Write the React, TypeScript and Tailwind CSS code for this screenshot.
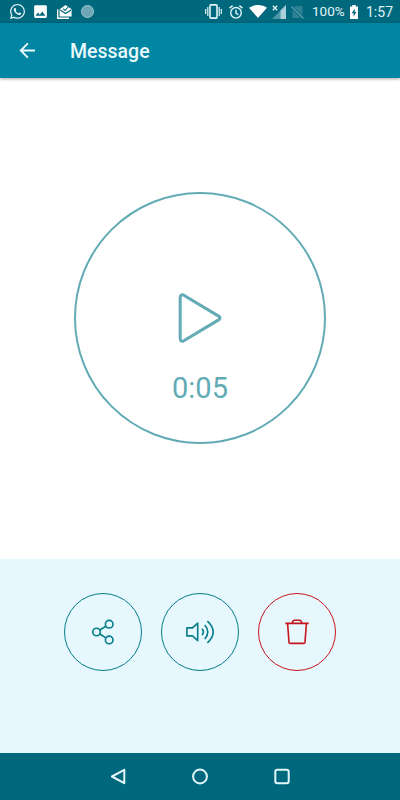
import React from 'react';
import { FaWhatsapp } from 'react-icons/fa';
import { MdImage } from 'react-icons/md';

function StatusBar() {
  return (
    <div className="h-[23px] shrink-0 bg-[#00687d] text-[#e2f4f8] flex items-center pl-[9px] pr-2">
      <FaWhatsapp className="w-[17px] h-[17px]" />
      <MdImage className="w-[17px] h-[17px] ml-[6px] text-white" />
      <svg className="w-[15px] h-[14px] ml-[8px]" viewBox="0 0 15 14">
        <path d="M0 4.5h1.4v8.1H12V14H0z" fill="#fff" />
        <path d="M2.6 4.3 8.6 0l6 4.3v7.2h-12z" fill="#fff" />
        <path d="m3.2 4.9 5.3 3.7L14 4.9" fill="none" stroke="#00687d" strokeWidth="1.2" />
        <path d="m6.2 3.6 1.9 1.8 3.5-3.9" fill="none" stroke="#00687d" strokeWidth="1.1" />
      </svg>
      <div className="w-[13px] h-[13px] ml-[9px] rounded-full bg-[#6ea6b5] border border-[#9cc8d2]" />

      <div className="ml-auto flex items-center">
        <svg className="w-[17px] h-[15px]" viewBox="0 0 17 15" fill="none" stroke="currentColor" strokeWidth="1.6">
          <rect x="5" y="0.9" width="7" height="13.2" rx="0.8" />
          <path d="M2.8 3v9M.7 5v5M14.2 3v9M16.3 5v5" strokeWidth="1.2" />
        </svg>
        <svg className="w-[14px] h-[14px] ml-[7px]" viewBox="0 0 14 14" fill="none" stroke="currentColor" strokeWidth="1.4">
          <circle cx="7" cy="7.8" r="5.3" />
          <path d="M7 4.8v3.4l2.3 1.4M.5 3.1 3.6.6M13.5 3.1 10.4.6" />
        </svg>
        <svg className="w-[18px] h-[13px] ml-[6px]" viewBox="0 0 18 13">
          <path d="M0 2.8C5-.9 13-.9 18 2.8L9 13z" fill="#fff" />
        </svg>
        <svg className="w-[14px] h-[14px] ml-[5px]" viewBox="0 0 14 14">
          <path d="M14 0v14H0z" fill="#4c98a8" />
          <path d="M14 0v14H8.6V5.4z" fill="#a9d0d8" />
          <path d="m.8.8 4.4 4.4M5.2.8.8 5.2" stroke="#e2f4f8" strokeWidth="1.3" />
        </svg>
        <svg className="w-[13px] h-[14px] ml-[5px]" viewBox="0 0 13 14">
          <path d="M4 1h7.5v12H1.5V4z" fill="#2d8191" />
          <path d="m.5 1.5 12 12" stroke="#00687d" strokeWidth="3" />
          <path d="m.5 1.5 12 12" stroke="#5b9fae" strokeWidth="1.2" />
        </svg>
        <span className="ml-[8px] w-[34px] text-[13.5px] leading-none whitespace-nowrap">100%</span>
        <svg className="w-[8px] h-[14px] ml-[4px]" viewBox="0 0 8 14">
          <path d="M2.3 0h3.4v1.4H8V14H0V1.4h2.3z" fill="#fff" />
          <path d="M4.8 3.4 1.7 8.3h1.9v3.5l2.8-5H4.6z" fill="#00687d" />
        </svg>
        <span className="ml-[8px] w-[26px] text-[14px] leading-none whitespace-nowrap">1:57</span>
      </div>
    </div>
  );
}

function ShareIcon() {
  return (
    <svg className="w-6 h-[26px]" viewBox="0 0 24 26" fill="none" stroke="currentColor" strokeWidth="1.6">
      <circle cx="5.5" cy="13" r="3.8" />
      <circle cx="18.2" cy="5.2" r="3.8" />
      <circle cx="18.2" cy="20.9" r="3.8" />
      <path d="m8.8 11 6.1-3.8M8.8 15l6.1 3.9" />
    </svg>
  );
}

function SpeakerIcon() {
  return (
    <svg className="w-[30px] h-[26px]" viewBox="0 0 30 26" fill="none" stroke="currentColor" strokeWidth="1.6">
      <path d="M1.9 8.9h5.6l5.2-4.7v17.4l-5.2-4.7H1.9z" strokeLinejoin="round" />
      <path d="M17 9.9q2.8 3.1 0 6.2M19.8 6q6 7 0 14M22.4 2.2q11.6 10.8 0 21.6" />
    </svg>
  );
}

function TrashIcon() {
  return (
    <svg className="w-[26px] h-[28px]" viewBox="0 0 26 28" fill="none" stroke="currentColor" strokeWidth="1.6">
      <path d="M1.3 5.4h23.4M8.2 5.2q.4-2.9 2.2-2.9h5.2q1.8 0 2.2 2.9" />
      <path d="M3.6 5.4 5 24.4q.1 1 1.1 1h13.8q1 0 1.1-1l1.4-19" />
    </svg>
  );
}

export default function App() {
  const actions = [
    { label: 'Share', icon: <ShareIcon />, color: 'text-[#067c88]' },
    { label: 'Speaker', icon: <SpeakerIcon />, color: 'text-[#067c88]' },
    { label: 'Delete', icon: <TrashIcon />, color: 'text-[#c4161c]' },
  ];

  return (
    <div className="w-full h-screen flex flex-col bg-white overflow-hidden font-['Roboto',sans-serif]">
      <StatusBar />

      <header className="h-[55px] shrink-0 bg-[#0086a2] text-[#e8f8fc] flex items-center pl-[19px] shadow-[0_1px_3px_rgba(0,0,0,0.35)]">
        <button aria-label="Back">
          <svg className="w-[17px] h-[17px]" viewBox="0 0 17 17" fill="none" stroke="currentColor" strokeWidth="1.9">
            <path d="M16 8.5H2M8.9 1.4 1.8 8.5l7.1 7.1" />
          </svg>
        </button>
        <h1 className="ml-[34px] pt-[2px] text-[19.5px] leading-6 font-medium">Message</h1>
      </header>

      {/* Player */}
      <main className="flex-1 flex justify-center items-start pt-[114px]">
        <div className="w-[252px] h-[252px] rounded-full border-2 border-[#62abb5] text-[#62abb5] flex flex-col items-center pt-[99px]">
          <svg className="w-[44px] h-[50px]" viewBox="0 0 44 50" fill="none" stroke="currentColor" strokeWidth="3">
            <path d="M2.2 4.4v41.2q.3 3.6 3.6 2.2L40.6 26.9q2.8-1.9 0-3.8L5.8 2.2Q2.5.8 2.2 4.4z" strokeLinejoin="round" />
          </svg>
          <span className="mt-[27px] text-[29px] leading-[36px]">0:05</span>
        </div>
      </main>

      {/* Actions */}
      <div className="h-[194px] shrink-0 bg-[#e6f7fd] flex justify-center gap-[19px] pt-[34px]">
        {actions.map((item) => (
          <button
            key={item.label}
            aria-label={item.label}
            className={`w-[78px] h-[78px] rounded-full border border-current flex items-center justify-center ${item.color}`}
          >
            {item.icon}
          </button>
        ))}
      </div>

      <nav className="h-[47px] shrink-0 bg-[#00687d] text-[#e2f6fa] flex items-center justify-center gap-16">
        <svg className="w-[18px] h-[17px]" viewBox="0 0 18 17" fill="none" stroke="currentColor" strokeWidth="2">
          <path d="M15.3 1.8v13.4L2.9 8.5z" strokeLinejoin="round" />
        </svg>
        <svg className="w-[18px] h-[17px]" viewBox="0 0 18 17" fill="none" stroke="currentColor" strokeWidth="2">
          <circle cx="9" cy="8.5" r="6.9" />
        </svg>
        <svg className="w-[18px] h-[17px]" viewBox="0 0 18 17" fill="none" stroke="currentColor" strokeWidth="2">
          <rect x="2.3" y="1.8" width="13.4" height="13.4" rx="2" />
        </svg>
      </nav>
    </div>
  );
}
